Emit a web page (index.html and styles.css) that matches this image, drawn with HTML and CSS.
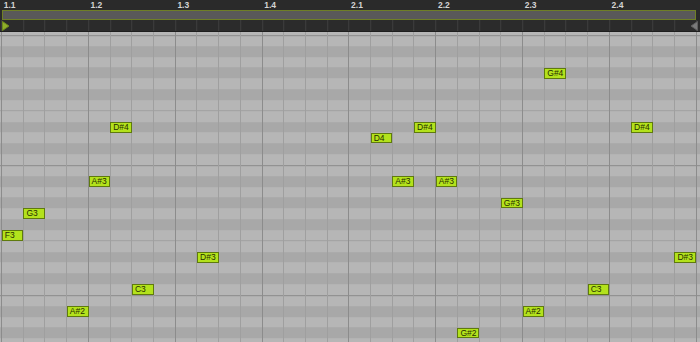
FILE: index.html
```html
<!DOCTYPE html>
<html>
<head>
<meta charset="utf-8">
<link rel="stylesheet" href="styles.css">
</head>
<body>
<div class="roll">
  <div class="ruler">
    <span class="lbl">1.1</span><span class="lbl">1.2</span><span class="lbl">1.3</span><span class="lbl">1.4</span>
    <span class="lbl">2.1</span><span class="lbl">2.2</span><span class="lbl">2.3</span><span class="lbl">2.4</span>
  </div>
  <div class="loop-row"><div class="loop"></div></div>
  <div class="markers">
    <svg class="start" width="8" height="10" viewBox="0 0 8 10"><path d="M0.5 0.5 L7 5 L0.5 9.5 Z" fill="#8fae2a" stroke="#6f8a1c"/></svg>
    <svg class="end" width="8" height="10" viewBox="0 0 8 10"><path d="M7.5 0.5 L1 5 L7.5 9.5 Z" fill="#7a7a7a" stroke="#5e5e5e"/></svg>
  </div>
  <div class="grid">
    <div class="note" style="grid-column:1;grid-row:20">F3</div>
    <div class="note" style="grid-column:2;grid-row:18">G3</div>
    <div class="note" style="grid-column:4;grid-row:27">A#2</div>
    <div class="note" style="grid-column:5;grid-row:15">A#3</div>
    <div class="note" style="grid-column:6;grid-row:10">D#4</div>
    <div class="note" style="grid-column:7;grid-row:25">C3</div>
    <div class="note" style="grid-column:10;grid-row:22">D#3</div>
    <div class="note" style="grid-column:18;grid-row:11">D4</div>
    <div class="note" style="grid-column:19;grid-row:15">A#3</div>
    <div class="note" style="grid-column:20;grid-row:10">D#4</div>
    <div class="note" style="grid-column:21;grid-row:15">A#3</div>
    <div class="note" style="grid-column:22;grid-row:29">G#2</div>
    <div class="note" style="grid-column:24;grid-row:17">G#3</div>
    <div class="note" style="grid-column:25;grid-row:27">A#2</div>
    <div class="note" style="grid-column:26;grid-row:5">G#4</div>
    <div class="note" style="grid-column:28;grid-row:25">C3</div>
    <div class="note" style="grid-column:30;grid-row:10">D#4</div>
    <div class="note" style="grid-column:32;grid-row:22">D#3</div>
  </div>
</div>
</body>
</html>
```
FILE: styles.css
```css
html, body {
  margin: 0;
  padding: 0;
  background: #2b2b2b;
}
.roll {
  width: 700px;
  height: 342px;
  display: flex;
  flex-direction: column;
  overflow: hidden;
  font-family: "Liberation Sans", Arial, sans-serif;
}
.ruler {
  height: 10px;
  flex: none;
  display: grid;
  grid-template-columns: repeat(8, 86.85px);
  padding-left: 1.7px;
  background: #2a2a2a;
}
.lbl {
  font-size: 8.5px;
  font-weight: bold;
  line-height: 10px;
  color: #d4d4d4;
  padding-left: 2px;
}
.loop-row {
  height: 10px;
  flex: none;
  background: #2a2a2a;
  padding-left: 2px;
  box-sizing: border-box;
}
.loop {
  width: 694px;
  height: 10px;
  box-sizing: border-box;
  background: #595959;
  border: 1px solid #6f7f26;
}
.markers {
  height: 11px;
  flex: none;
  display: flex;
  justify-content: space-between;
  align-items: center;
  padding: 0 2px 0 2px;
  background-color: #2b2b2b;
  background-image: repeating-linear-gradient(to right, #3e3e3e 0 1px, transparent 1px 21.71px);
  background-position: 1.2px 0;
  border-bottom: 1px solid #1e1e1e;
}
.markers svg { display: block; }
.grid {
  flex: 1;
  display: grid;
  grid-template-columns: repeat(32, 21.71px);
  grid-template-rows: 3.2px repeat(29, 10.833px);
  padding-left: 1.7px;
  background-color: #b6b6b6;
  background-image:
    repeating-linear-gradient(to right, #8c8c8c 0 1px, transparent 1px 86.85px),
    repeating-linear-gradient(to right, #9f9f9f 0 1px, transparent 1px 21.71px),
    linear-gradient(to bottom, #8a8a8a 0 1px, transparent 1px 75.33px, #a0a0a0 75.33px 76.33px, transparent 76.33px 130px),
    linear-gradient(to bottom,
      transparent 0 10.83px,
      #a8a8a8 10.83px 21.67px,
      transparent 21.67px 32.5px,
      #a8a8a8 32.5px 43.33px,
      transparent 43.33px 54.17px,
      #a8a8a8 54.17px 65px,
      transparent 65px 86.67px,
      #a8a8a8 86.67px 97.5px,
      transparent 97.5px 108.33px,
      #a8a8a8 108.33px 119.17px,
      transparent 119.17px 130px);
  background-size: 100% 100%, 100% 100%, 100% 130px, 100% 130px;
  background-position: 1.2px 0, 1.2px 0, 0 3.2px, 0 3.2px;
  background-repeat: no-repeat, no-repeat, repeat-y, repeat-y;
}
.note {
  box-sizing: border-box;
  height: 10.833px;
  background: #b3e21c;
  border: 1px solid #5f7a0e;
  font-size: 8.5px;
  line-height: 9px;
  color: #262e00;
  padding-left: 2px;
  white-space: nowrap;
  overflow: hidden;
}
```
